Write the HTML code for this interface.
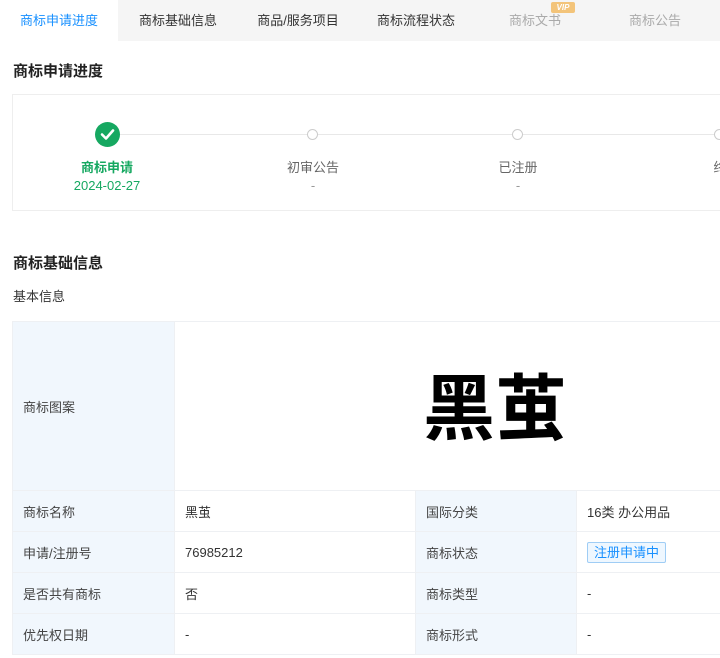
<!DOCTYPE html>
<html><head><meta charset="utf-8"><style>
*{margin:0;padding:0;box-sizing:border-box}
body{width:720px;height:658px;overflow:hidden;background:#fff;font-family:"Liberation Sans","Noto Sans CJK SC",sans-serif;color:#333;position:relative;font-size:13px}
.tabs{position:absolute;left:0;top:0;width:720px;height:41px;background:#f5f5f5}
.tab{position:absolute;top:0;height:41px;line-height:41px;width:120px;text-align:center;font-size:13px;color:#333}
.tab.act{background:#fff;color:#1890ff;left:0;width:118px}
.tab.dis{color:#aaa}
.vip{position:absolute;left:551px;top:2px;width:24px;height:11px;background:#f3c47a;color:#fff;font-size:8px;font-weight:bold;font-style:italic;line-height:11px;text-align:center;border-radius:2px}
.h{position:absolute;left:13px;font-size:15px;font-weight:bold;color:#222}
.box{position:absolute;left:12px;top:94px;width:720px;height:117px;border:1px solid #eee}
.line{position:absolute;left:107px;top:134px;width:620px;height:1px;background:#e8e8e8}
.dot{position:absolute;top:129px;width:11px;height:11px;border:1.5px solid #ccc;border-radius:50%;background:#fff}
.lab{position:absolute;top:157px;width:120px;text-align:center;font-size:13px;color:#666}
.sub{position:absolute;top:178px;width:120px;text-align:center;font-size:13px;color:#999}
table{position:absolute;left:12px;top:321px;border-collapse:collapse;width:720px}
td{border:1px solid #eef0f3;font-size:13px;color:#333;padding-left:10px;height:41px}
td.k{background:#f1f7fd;color:#444}
.tag{display:inline-block;border:1px solid #9fcdf5;background:#eef7ff;color:#1890ff;padding:0 6px;height:21px;line-height:19px;font-size:13px;border-radius:2px}
</style></head><body>
<div class="tabs">
<div class="tab act">商标申请进度</div>
<div class="tab" style="left:118px">商标基础信息</div>
<div class="tab" style="left:238px">商品/服务项目</div>
<div class="tab" style="left:356px">商标流程状态</div>
<div class="tab dis" style="left:475px">商标文书</div>
<div class="tab dis" style="left:595px">商标公告</div>
<div class="vip">VIP</div>
</div>
<div class="h" style="top:60px">商标申请进度</div>
<div class="box"></div>
<div class="line"></div>
<div style="position:absolute;left:95px;top:122px;width:25px;height:25px;border-radius:50%;background:#16a861"><svg width="25" height="25"><path d="M7 12.5l4 4 7-8" stroke="#fff" stroke-width="2.6" fill="none" stroke-linecap="round" stroke-linejoin="round"/></svg></div>
<div class="dot" style="left:307px"></div>
<div class="dot" style="left:512px"></div>
<div class="dot" style="left:714px"></div>
<div class="lab" style="left:47px;color:#16a861;font-weight:bold">商标申请</div>
<div class="sub" style="left:47px;color:#16a861">2024-02-27</div>
<div class="lab" style="left:253px">初审公告</div>
<div class="sub" style="left:253px">-</div>
<div class="lab" style="left:458px">已注册</div>
<div class="sub" style="left:458px">-</div>
<div class="lab" style="left:660px">终</div>
<div class="h" style="top:252px">商标基础信息</div>
<div style="position:absolute;left:13px;top:286px;font-size:13px;color:#333">基本信息</div>
<table>
<tr><td class="k" style="width:162px;height:169px">商标图案</td><td colspan="3" style="text-align:center;padding-left:0"><span style="font-size:72px;color:#000;font-weight:bold;font-family:'Noto Sans CJK SC',sans-serif;position:relative;left:42px;top:-4px">黑茧</span></td></tr>
<tr><td class="k">商标名称</td><td style="width:241px">黑茧</td><td class="k" style="width:161px">国际分类</td><td>16类 办公用品</td></tr>
<tr><td class="k">申请/注册号</td><td>76985212</td><td class="k">商标状态</td><td><span class="tag">注册申请中</span></td></tr>
<tr><td class="k">是否共有商标</td><td>否</td><td class="k">商标类型</td><td>-</td></tr>
<tr><td class="k">优先权日期</td><td>-</td><td class="k">商标形式</td><td>-</td></tr>
</table>
</body></html>
